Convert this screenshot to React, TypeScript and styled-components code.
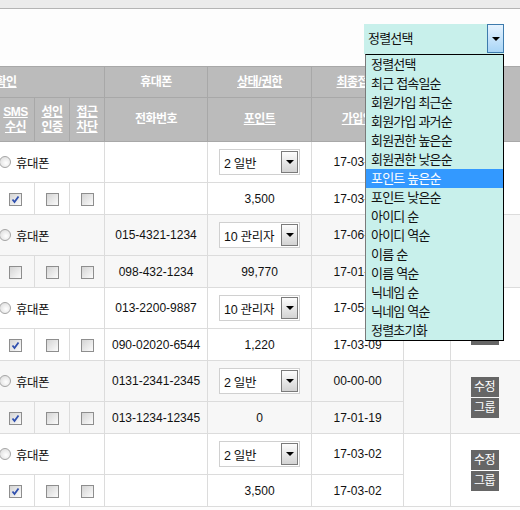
import React from "react";
import styled, { createGlobalStyle } from "styled-components";

interface IMember {
  name: string;
  mobile: string;
  grade: string;
  lastLogin: string;
  tel: string;
  point: string;
  joined: string;
  checks: boolean[];
}

const members: IMember[] = [
  { name: "김민수", mobile: "", grade: "2 일반", lastLogin: "17-03-02", tel: "", point: "3,500", joined: "17-03-02", checks: [true, false, false] },
  { name: "관리자", mobile: "015-4321-1234", grade: "10 관리자", lastLogin: "17-06-14", tel: "098-432-1234", point: "99,770", joined: "17-01-05", checks: [false, false, false] },
  { name: "운영자", mobile: "013-2200-9887", grade: "10 관리자", lastLogin: "17-05-22", tel: "090-02020-6544", point: "1,220", joined: "17-03-09", checks: [true, false, false] },
  { name: "이영희", mobile: "0131-2341-2345", grade: "2 일반", lastLogin: "00-00-00", tel: "013-1234-12345", point: "0", joined: "17-01-19", checks: [true, false, false] },
  { name: "박철수", mobile: "", grade: "2 일반", lastLogin: "17-03-02", tel: "", point: "3,500", joined: "17-03-02", checks: [true, false, false] },
];

const sortOptions = [
  "정렬선택",
  "최근 접속일순",
  "회원가입 최근순",
  "회원가입 과거순",
  "회원권한 높은순",
  "회원권한 낮은순",
  "포인트 높은순",
  "포인트 낮은순",
  "아이디 순",
  "아이디 역순",
  "이름 순",
  "이름 역순",
  "닉네임 순",
  "닉네임 역순",
  "정렬초기화",
];

const GlobalStyle = createGlobalStyle`
  html, body {
    margin: 0;
    padding: 0;
    background: #fdfdfd;
  }
  body {
    font-family: "Liberation Sans", "Noto Sans CJK KR", sans-serif;
    font-size: 12px;
    color: #111;
  }
`;

const SPage = styled.div`
  width: 520px;
  height: 510px;
  overflow: hidden;
  background: #fdfdfd;
`;

const STopStrip = styled.div`
  height: 8px;
  background: #ebebeb;
  border-bottom: 1px solid #b4b4b4;
`;

const SToolbar = styled.div`
  height: 57px;
  box-sizing: border-box;
  padding: 15px 16px 0 0;
  display: flex;
  justify-content: flex-end;
  align-items: flex-start;
`;

const SSort = styled.div`
  position: relative;
  width: 140px;
  z-index: 10;
`;

const SSortBox = styled.div`
  display: flex;
  height: 30px;
  background: #c8f0eb;
`;

const SSortLabel = styled.div`
  flex: 1;
  padding-left: 4px;
  line-height: 30px;
  font-size: 13px;
  letter-spacing: -0.8px;
`;

const SSortButton = styled.div`
  width: 15px;
  height: 27px;
  border: 1px solid #3d7bad;
  background: linear-gradient(#e6f3ff, #a8d5f6);
  display: grid;
  place-items: center;
`;

const SArrow = styled.span`
  width: 0;
  height: 0;
  border-left: 4px solid transparent;
  border-right: 4px solid transparent;
  border-top: 4px solid #000;
`;

const SDropList = styled.ul`
  position: absolute;
  top: 30px;
  left: 1px;
  right: 0;
  margin: 0;
  padding: 0;
  list-style: none;
  background: #c8f0eb;
  border: 1px solid #000;
  border-left-color: #7a7a7a;
`;

const SDropItem = styled.li<{ $active?: boolean }>`
  height: 19px;
  line-height: 19px;
  padding-left: 5px;
  font-size: 13px;
  letter-spacing: -0.8px;
  white-space: nowrap;
  background: ${({ $active }) => ($active ? "#3399ff" : "transparent")};
  color: ${({ $active }) => ($active ? "#fff" : "#111")};
`;

const STableWrap = styled.div`
  margin-left: -114px;
`;

const STable = styled.table`
  border-collapse: collapse;
  table-layout: fixed;
  width: 634px;
`;

const SHeadRow = styled.tr<{ $h: number }>`
  height: ${({ $h }) => `${$h}px`};
`;

const STh = styled.th<{ $link?: boolean }>`
  background: #bbbbbb;
  border: 1px solid #a8a8a8;
  color: #fff;
  font-weight: bold;
  font-size: 12px;
  line-height: 15px;
  letter-spacing: -0.5px;
  padding: 0;
  text-decoration: ${({ $link }) => ($link ? "underline" : "none")};
`;

const SRow = styled.tr<{ $h: number; $shade: boolean }>`
  height: ${({ $h }) => `${$h}px`};
  background: ${({ $shade }) => ($shade ? "#f7f7f7" : "#fff")};
`;

const STd = styled.td<{ $left?: boolean }>`
  border: 1px solid #dcdcdc;
  padding: ${({ $left }) => ($left ? "0 0 0 2px" : "0")};
  text-align: ${({ $left }) => ($left ? "left" : "center")};
  font-size: 12px;
  white-space: nowrap;
`;

const SRadioLabel = styled.span`
  display: inline-flex;
  align-items: center;
  gap: 5px;
  font-size: 12.5px;
  letter-spacing: -0.5px;
`;

const SRadio = styled.span`
  width: 12px;
  height: 12px;
  box-sizing: border-box;
  border-radius: 50%;
  border: 1px solid #a5a5a5;
  background: radial-gradient(circle at 60% 60%, #fff, #d8d8d8);
`;

const SCheck = styled.span`
  display: inline-grid;
  place-items: center;
  width: 13px;
  height: 13px;
  box-sizing: border-box;
  border: 1px solid #8e8e8e;
  background: linear-gradient(135deg, #d4d4d4, #fbfbfb);
  vertical-align: middle;
`;

const SMiniSelect = styled.div`
  display: inline-flex;
  align-items: center;
  justify-content: space-between;
  width: 81px;
  height: 26px;
  box-sizing: border-box;
  border: 1px solid #d0d0d0;
  background: #fff;
  padding: 0 1px 0 4px;
  vertical-align: middle;
  font-size: 12.5px;
  letter-spacing: -0.3px;
`;

const SMiniButton = styled.span`
  width: 17px;
  height: 22px;
  box-sizing: border-box;
  border: 1px solid #7b7b7b;
  background: linear-gradient(#fdfdfd, #d3d3d3);
  display: grid;
  place-items: center;
`;

const SActions = styled.div`
  display: flex;
  flex-direction: column;
  align-items: center;
  gap: 1px;
  padding-right: 2px;
`;

const SActionButton = styled.span`
  width: 28px;
  height: 20px;
  background: #666;
  color: #fff;
  font-size: 12px;
  line-height: 20px;
  text-align: center;
  letter-spacing: -0.5px;
`;

const CheckBox = ({ checked }: { checked: boolean }) => (
  <SCheck>
    {checked && (
      <svg width="9" height="9" viewBox="0 0 9 9">
        <path d="M1.5 4.5 L3.5 7 L7.5 1.5" fill="none" stroke="#2f4fae" strokeWidth="1.8" />
      </svg>
    )}
  </SCheck>
);

const App = () => {
  return (
    <>
      <GlobalStyle />
      <SPage>
        <STopStrip />
        <SToolbar>
          <SSort>
            <SSortBox>
              <SSortLabel>정렬선택</SSortLabel>
              <SSortButton>
                <SArrow />
              </SSortButton>
            </SSortBox>
            <SDropList>
              {sortOptions.map((opt, i) => (
                <SDropItem key={opt} $active={i === 6}>
                  {opt}
                </SDropItem>
              ))}
            </SDropList>
          </SSort>
        </SToolbar>

        <STableWrap>
          <STable>
            <colgroup>
              <col style={{ width: 110 }} />
              <col style={{ width: 38 }} />
              <col style={{ width: 35 }} />
              <col style={{ width: 35 }} />
              <col style={{ width: 103 }} />
              <col style={{ width: 104 }} />
              <col style={{ width: 92 }} />
              <col style={{ width: 47 }} />
              <col style={{ width: 70 }} />
            </colgroup>
            <thead>
              <SHeadRow $h={31}>
                <STh colSpan={4} $link>본인확인</STh>
                <STh>휴대폰</STh>
                <STh $link>상태/권한</STh>
                <STh $link>최종접속</STh>
                <STh rowSpan={2} $link>메일</STh>
                <STh rowSpan={2}>관리</STh>
              </SHeadRow>
              <SHeadRow $h={44}>
                <STh $link>이름</STh>
                <STh $link>SMS<br />수신</STh>
                <STh $link>성인<br />인증</STh>
                <STh $link>접근<br />차단</STh>
                <STh>전화번호</STh>
                <STh $link>포인트</STh>
                <STh $link>가입일</STh>
              </SHeadRow>
            </thead>
            <tbody>
              {members.map((m, i) => (
                <React.Fragment key={i}>
                  <SRow $h={41} $shade={i % 2 === 1}>
                    <STd rowSpan={2}>{m.name}</STd>
                    <STd colSpan={3} $left>
                      <SRadioLabel>
                        <SRadio />
                        휴대폰
                      </SRadioLabel>
                    </STd>
                    <STd>{m.mobile}</STd>
                    <STd>
                      <SMiniSelect>
                        {m.grade}
                        <SMiniButton>
                          <SArrow />
                        </SMiniButton>
                      </SMiniSelect>
                    </STd>
                    <STd>{m.lastLogin}</STd>
                    <STd rowSpan={2} />
                    <STd rowSpan={2}>
                      <SActions>
                        <SActionButton>수정</SActionButton>
                        <SActionButton>그룹</SActionButton>
                      </SActions>
                    </STd>
                  </SRow>
                  <SRow $h={32} $shade={i % 2 === 1}>
                    {m.checks.map((c, j) => (
                      <STd key={j}>
                        <CheckBox checked={c} />
                      </STd>
                    ))}
                    <STd>{m.tel}</STd>
                    <STd>{m.point}</STd>
                    <STd>{m.joined}</STd>
                  </SRow>
                </React.Fragment>
              ))}
            </tbody>
          </STable>
        </STableWrap>
      </SPage>
    </>
  );
};

export default App;
